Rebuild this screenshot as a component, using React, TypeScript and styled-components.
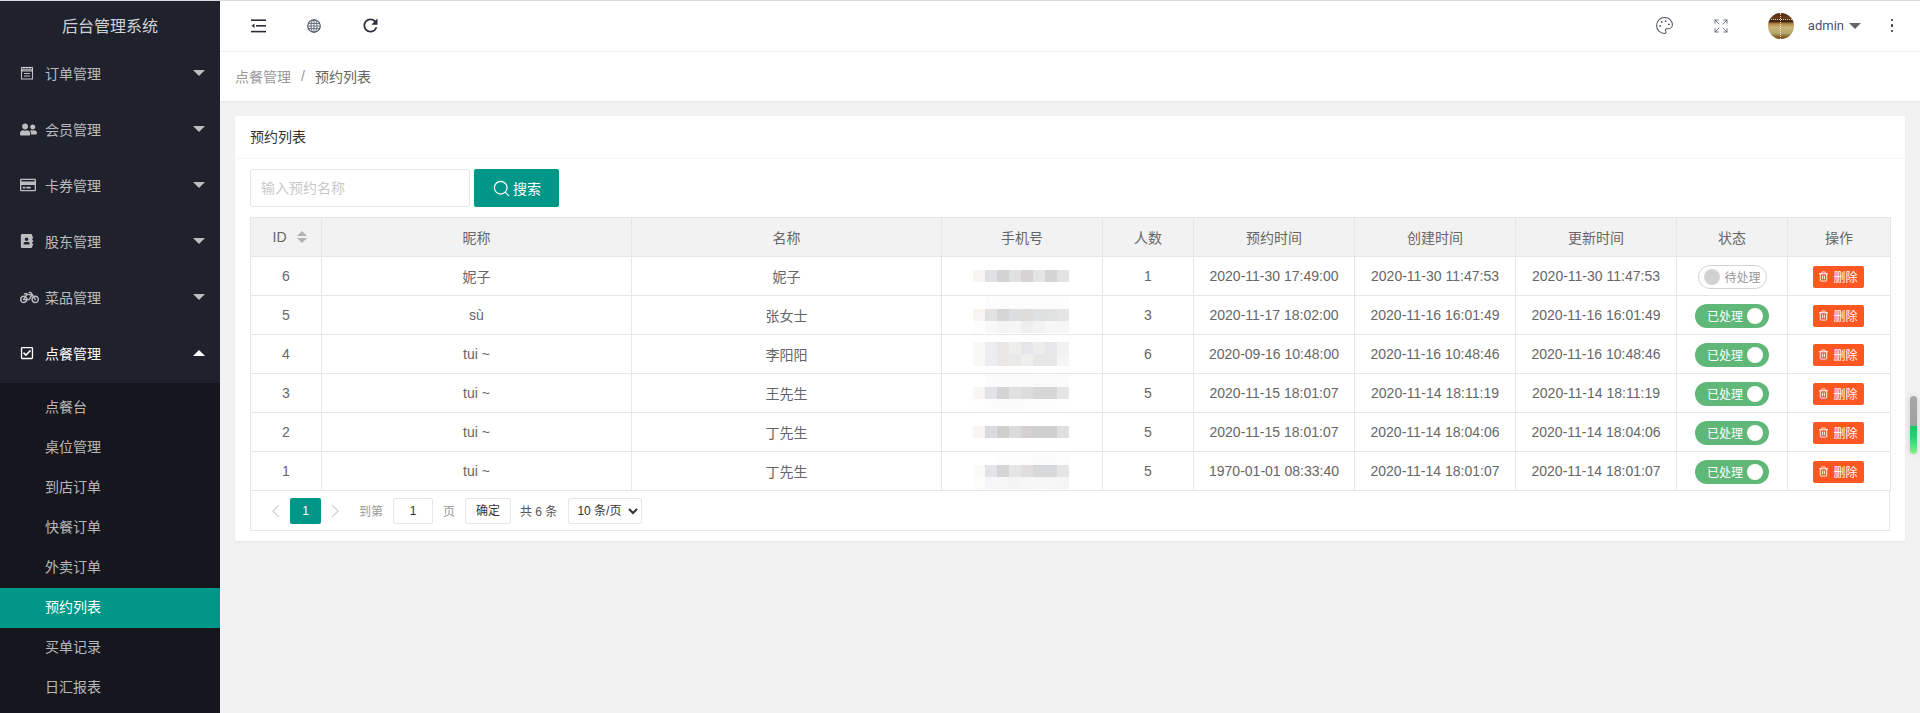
import React from "react";
import styled, { createGlobalStyle } from "styled-components";
import { Expand, Palette, Search, Trash2 } from "lucide-react";
import { MdRefresh } from "react-icons/md";
import {
  FaAddressBook,
  FaBicycle,
  FaRegCheckSquare,
  FaRegCreditCard,
  FaUserFriends,
} from "react-icons/fa";

const FONT = `"Liberation Sans", "Noto Sans CJK SC", sans-serif`;

const GlobalStyle = createGlobalStyle`
  html, body { margin: 0; padding: 0; height: 100%; }
  body { font-family: ${FONT}; font-size: 14px; color: #666; background: #f2f2f2; overflow: hidden; }
  * { box-sizing: border-box; }
`;

const Layout = styled.div`
  display: grid;
  grid-template-columns: 220px 1fr;
  height: 713px;
  border-top: 1px solid #d9d9de;
  position: relative;
`;

const Sidebar = styled.aside`
  background: #1f222c;
  overflow: hidden;
`;

const Logo = styled.div`
  height: 45px;
  padding-top: 3px;
  line-height: 45px;
  text-align: center;
  font-size: 16px;
  color: #d0d2d6;
`;

const MenuItem = styled.div<{ $active?: boolean }>`
  display: flex;
  align-items: center;
  height: 56px;
  padding: 0 15px 2px 20px;
  color: ${(p) => (p.$active ? "#fff" : "rgba(255,255,255,.7)")};
  svg { flex: none; }
`;

const MenuIcon = styled.span`
  display: flex;
  align-items: center;
  width: 25px;
`;

const MenuLabel = styled.span`
  flex: 1;
`;

const Caret = styled.span<{ $up?: boolean; $color?: string }>`
  width: 0;
  height: 0;
  border-left: 6px solid transparent;
  border-right: 6px solid transparent;
  ${(p) =>
    p.$up
      ? `border-bottom: 6px solid ${p.$color || "#fff"};`
      : `border-top: 6px solid ${p.$color || "rgba(255,255,255,.7)"};`}
`;

const SubMenu = styled.div`
  margin-top: 1px;
  padding: 5px 0;
  background: #16171e;
`;

const SubItem = styled.div<{ $active?: boolean }>`
  height: 40px;
  line-height: 39px;
  padding-left: 45px;
  color: ${(p) => (p.$active ? "#fff" : "rgba(255,255,255,.7)")};
  background: ${(p) => (p.$active ? "#009688" : "transparent")};
`;

const Main = styled.main`
  min-width: 0;
  display: flex;
  flex-direction: column;
`;

const Navbar = styled.header`
  display: flex;
  align-items: center;
  justify-content: space-between;
  height: 51px;
  padding-bottom: 1px;
  background: #fff;
  border-bottom: 1px solid #eee;
`;

const NavGroup = styled.div`
  display: flex;
  align-items: center;
`;

const LeftNavGroup = styled(NavGroup)`
  padding-left: 10px;
`;

const NavIcon = styled.span`
  display: flex;
  align-items: center;
  justify-content: center;
  width: 56px;
  height: 50px;
  color: #2b2e3a;
`;

const RightIcon = styled(NavIcon)`
  color: #4d5668;
`;

const Avatar = styled.span`
  position: relative;
  width: 26px;
  height: 26px;
  margin: 0 14px 0 19px;
  border-radius: 50%;
  overflow: hidden;
  background: linear-gradient(
    180deg,
    #4a2a10 0,
    #6d3c15 18%,
    #3d1f0c 32%,
    #b58a48 42%,
    #c9b47c 55%,
    #b5a868 78%,
    #8e6a2c 90%,
    #6d4012 100%
  );
  &::before {
    content: "";
    position: absolute;
    left: 12px;
    top: 0;
    bottom: 0;
    border-left: 1px dotted rgba(255, 255, 255, 0.8);
  }
  &::after {
    content: "";
    position: absolute;
    left: 0;
    right: 0;
    top: 6px;
    border-top: 1px dotted rgba(255, 255, 255, 0.8);
  }
`;

const UserName = styled.span`
  font-family: Roboto, ${FONT};
  font-size: 13px;
  color: #4a5468;
  margin-right: 5px;
`;

const Kebab = styled.span`
  display: flex;
  flex-direction: column;
  align-items: center;
  gap: 3px;
  width: 14px;
  margin: 0 21px 0 24px;
  i {
    width: 2.5px;
    height: 2.5px;
    border-radius: 50%;
    background: #2b2e3a;
  }
`;

const Crumbs = styled.nav`
  display: flex;
  align-items: center;
  height: 49px;
  padding: 0 0 2px 15px;
  background: #fff;
  box-shadow: 0 1px 2px rgba(0, 0, 0, 0.05);
`;

const CrumbLink = styled.span`
  color: #999;
`;

const CrumbSep = styled.span`
  margin: 0 10px;
  color: #999;
`;

const CrumbCurrent = styled.span`
  color: #666;
`;

const Content = styled.div`
  padding: 15px;
`;

const Card = styled.section`
  background: #fff;
  border-radius: 2px;
  box-shadow: 0 1px 2px rgba(0, 0, 0, 0.05);
`;

const CardTitle = styled.div`
  height: 43px;
  line-height: 42px;
  padding-left: 15px;
  color: #333;
  border-bottom: 1px solid #f6f6f6;
`;

const CardBody = styled.div`
  padding: 10px 15px;
`;

const SearchBar = styled.div`
  display: flex;
  gap: 4px;
  margin-bottom: 10px;
`;

const SearchInput = styled.input`
  width: 220px;
  height: 38px;
  padding-left: 10px;
  border: 1px solid #e6e6e6;
  border-radius: 2px;
  font: 14px ${FONT};
  outline: none;
  &::placeholder { color: #c8c8c8; }
`;

const SearchButton = styled.button`
  display: flex;
  align-items: center;
  justify-content: center;
  gap: 2px;
  width: 85px;
  height: 38px;
  border: 0;
  border-radius: 2px;
  background: #009688;
  color: #fff;
  font: 14px ${FONT};
`;

const Table = styled.table`
  width: 1640px;
  table-layout: fixed;
  border-collapse: collapse;
  border: 1px solid #e6e6e6;
`;

const Th = styled.th`
  height: 39px;
  padding: 0;
  font-weight: 400;
  color: #666;
  background: #f2f2f2;
  border: 1px solid #e6e6e6;
`;

const HeadSort = styled.span`
  display: flex;
  align-items: center;
  justify-content: center;
  gap: 10px;
  padding-left: 7px;
`;

const Td = styled.td`
  height: 39px;
  padding: 0;
  text-align: center;
  color: #666;
  border: 1px solid #e6e6e6;
`;

const PhoneCell = styled(Td)`
  padding-right: 3px;
`;

const ControlCell = styled.div<{ $shift?: number }>`
  display: flex;
  justify-content: center;
  padding: 1px ${(p) => p.$shift || 0}px 0 0;
`;

const SortArrows = styled.span`
  display: inline-flex;
  flex-direction: column;
  gap: 2px;
  i {
    width: 0;
    height: 0;
    border-left: 5px solid transparent;
    border-right: 5px solid transparent;
  }
  i:first-child { border-bottom: 5px solid #b2b2b2; }
  i:last-child { border-top: 5px solid #b2b2b2; }
`;

const Mosaic = styled.div`
  display: grid;
  grid-template-columns: repeat(8, 12px);
  grid-auto-rows: 12px;
  width: 96px;
  margin: 0 auto;
`;

const MosaicCell = styled.span<{ $color: string }>`
  background: ${(p) => p.$color};
`;

const Switch = styled.span<{ $on: boolean }>`
  display: flex;
  align-items: center;
  justify-content: space-between;
  flex-direction: ${(p) => (p.$on ? "row" : "row-reverse")};
  width: ${(p) => (p.$on ? 74 : 69)}px;
  height: 24px;
  padding: ${(p) => (p.$on ? "0 6px 0 12px" : "0 5px")};
  border-radius: 20px;
  font-size: 12px;
  color: ${(p) => (p.$on ? "#fff" : "#999")};
  background: ${(p) => (p.$on ? "#5fb878" : "#fff")};
  border: ${(p) => (p.$on ? "0" : "1px solid #d2d2d2")};
  &::after {
    content: "";
    width: 16px;
    height: 16px;
    border-radius: 50%;
    background: ${(p) => (p.$on ? "#fff" : "#d2d2d2")};
  }
`;

const DeleteButton = styled.button`
  display: flex;
  align-items: center;
  justify-content: center;
  gap: 4px;
  width: 51px;
  height: 22px;
  padding: 0;
  border: 0;
  border-radius: 2px;
  background: #ff5722;
  color: #fff;
  font: 12px ${FONT};
`;

const Pager = styled.div`
  display: flex;
  align-items: center;
  height: 40px;
  padding-left: 10px;
  border: 1px solid #e6e6e6;
  border-top: 0;
  font-size: 12px;
  color: #555;
`;

const PagerArrow = styled.span`
  display: flex;
  width: 29px;
  justify-content: center;
  color: #d2d2d2;
`;

const PageCurrent = styled.span`
  width: 31px;
  height: 26px;
  line-height: 26px;
  text-align: center;
  color: #fff;
  background: #009688;
  border-radius: 2px;
`;

const PagerText = styled.span`
  color: #999;
`;

const GotoText = styled(PagerText)`
  margin-left: 9px;
`;

const PagerInput = styled.span`
  width: 40px;
  height: 26px;
  line-height: 24px;
  margin: 0 10px;
  text-align: center;
  color: #333;
  border: 1px solid #e6e6e6;
  border-radius: 2px;
`;

const PagerButton = styled.span`
  width: 46px;
  height: 26px;
  line-height: 24px;
  margin: 0 9px 0 10px;
  text-align: center;
  color: #333;
  border: 1px solid #e6e6e6;
  border-radius: 2px;
`;

const PagerSelect = styled.select`
  width: 74px;
  height: 26px;
  margin-left: 11px;
  padding: 0 0 0 4px;
  font: 12px ${FONT};
  color: #333;
  background: #fff;
  border: 1px solid #e6e6e6;
  border-radius: 2px;
`;

const ScrollWidget = styled.div`
  position: absolute;
  top: 395px;
  right: 3px;
  width: 7px;
  height: 58px;
  border-radius: 4px;
  background: linear-gradient(180deg, #a8a8a8 0, #a0a0a0 52%, #22c566 52%, #2ecc71 70%, #86ef8c 100%);
  box-shadow: 0 0 6px rgba(0, 0, 0, 0.15);
`;

function NotebookIcon() {
  return (
    <svg width="14" height="14" viewBox="0 0 14 14" fill="none" stroke="currentColor" strokeWidth="1.1">
      <rect x="1.5" y="1.5" width="11" height="11.5" />
      <path d="M1.5 3.8h11M1.5 5h11M4 7.5h6M4 10h6M4 1v2M7 1v2M10 1v2" />
    </svg>
  );
}

function IndentIcon() {
  return (
    <svg width="15" height="14" viewBox="0 0 15 14" fill="currentColor">
      <rect x="0" y="0.4" width="15" height="1.6" />
      <rect x="5" y="6" width="10" height="1.6" />
      <rect x="0" y="11.8" width="15" height="1.6" />
      <path d="M0.5 6.8 3.5 4.6v4.4z" />
    </svg>
  );
}

function GlobeIcon() {
  return (
    <svg width="14" height="14" viewBox="0 0 14 14" fill="none" stroke="#4a5060" strokeWidth=".8">
      <circle cx="7" cy="7" r="6.3" strokeWidth="1.1" />
      <ellipse cx="7" cy="7" rx="3" ry="6.3" />
      <path d="M7 .7v12.6M1 4.4h12M.7 7h12.6M1 9.6h12" />
    </svg>
  );
}

const widths = [71, 310, 310, 161, 91, 161, 161, 161, 111, 103];
const headers = ["ID", "昵称", "名称", "手机号", "人数", "预约时间", "创建时间", "更新时间", "状态", "操作"];

const W = "#ffffff";
const rows = [
  {
    id: 6,
    nick: "妮子",
    name: "妮子",
    count: 1,
    booked: "2020-11-30 17:49:00",
    created: "2020-11-30 11:47:53",
    updated: "2020-11-30 11:47:53",
    done: false,
    phone: [["#f7f4f1", "#e0e1e4", "#d4d3d3", "#e0e1e0", "#d7d3d2", "#e3e5e4", "#d5d4d4", "#e3e3e3"]],
  },
  {
    id: 5,
    nick: "sù",
    name: "张女士",
    count: 3,
    booked: "2020-11-17 18:02:00",
    created: "2020-11-16 16:01:49",
    updated: "2020-11-16 16:01:49",
    done: true,
    phone: [
      [W, "#fcfcfc", "#fcfcfc", "#fcfcfc", "#fcfcfc", "#fcfcfc", "#fcfcfc", "#fcfcfc"],
      ["#f7f4f1", "#e0e2e2", "#d6d6d6", "#dcdee0", "#dfdddc", "#dee0e2", "#e0e2e1", "#e5e5e5"],
      ["#fdfdfd", "#f8f8f9", "#f5f5f5", "#f5f6f6", "#efeff0", "#f3f3f4", "#f7f7f7", "#f6f6f6"],
    ],
  },
  {
    id: 4,
    nick: "tui ~",
    name: "李阳阳",
    count: 6,
    booked: "2020-09-16 10:48:00",
    created: "2020-11-16 10:48:46",
    updated: "2020-11-16 10:48:46",
    done: true,
    phone: [
      ["#f8f8f7", "#ebedf0", "#e8e7e5", "#eeeeed", "#e5e6e9", "#ededee", "#e6e7e8", "#f1f2f2"],
      ["#f8f8f7", "#ebedf0", "#e9e8e6", "#e9e9e7", "#eeeeec", "#e7e7e8", "#e7e7e7", "#f4f5f6"],
    ],
  },
  {
    id: 3,
    nick: "tui ~",
    name: "王先生",
    count: 5,
    booked: "2020-11-15 18:01:07",
    created: "2020-11-14 18:11:19",
    updated: "2020-11-14 18:11:19",
    done: true,
    phone: [
      [W, "#fcfcfc", "#fbfbfb", "#fbfbfb", "#fafafa", "#f9f9f9", "#f9f9f9", "#fbfbfb"],
      ["#f8f6f3", "#e1e3e6", "#d4d4d4", "#e1e1e1", "#dcdcda", "#d6d7d6", "#d6d7d6", "#e5e5e5"],
      ["#fefefe", "#fcfcfc", "#fbfbfb", "#fbfbfb", "#fcfcfc", "#fcfcfc", "#fdfdfd", "#fefefe"],
    ],
  },
  {
    id: 2,
    nick: "tui ~",
    name: "丁先生",
    count: 5,
    booked: "2020-11-15 18:01:07",
    created: "2020-11-14 18:04:06",
    updated: "2020-11-14 18:04:06",
    done: true,
    phone: [["#f7f4f1", "#dadbdf", "#cfcfcd", "#dbdbdb", "#d2d1cf", "#cfcfd0", "#cfcfd0", "#dfdfdf"]],
  },
  {
    id: 1,
    nick: "tui ~",
    name: "丁先生",
    count: 5,
    booked: "1970-01-01 08:33:40",
    created: "2020-11-14 18:01:07",
    updated: "2020-11-14 18:01:07",
    done: true,
    phone: [
      [W, W, "#fdfdfd", "#fcfcfc", "#fcfcfc", "#fbfbfb", "#fbfbfb", "#fcfcfc"],
      ["#fafaf8", "#e2e4e7", "#d5d5d5", "#e4e6e6", "#dfdedd", "#d7d8d9", "#d7d8d9", "#e5e5e5"],
      ["#fcfcfb", "#f5f6f8", "#f6f6f6", "#f3f4f4", "#f6f6f6", "#f6f7f7", "#f6f6f6", "#f5f5f5"],
    ],
  },
];

const menus = [
  { label: "订单管理", icon: <NotebookIcon /> },
  { label: "会员管理", icon: <FaUserFriends size={17} /> },
  { label: "卡券管理", icon: <FaRegCreditCard size={16} /> },
  { label: "股东管理", icon: <FaAddressBook size={14} /> },
  { label: "菜品管理", icon: <FaBicycle size={19} /> },
];

const subMenus = ["点餐台", "桌位管理", "到店订单", "快餐订单", "外卖订单", "预约列表", "买单记录", "日汇报表"];

function App() {
  return (
    <>
      <GlobalStyle />
      <Layout>
        <Sidebar>
          <Logo>后台管理系统</Logo>
          {menus.map((m) => (
            <MenuItem key={m.label}>
              <MenuIcon>{m.icon}</MenuIcon>
              <MenuLabel>{m.label}</MenuLabel>
              <Caret />
            </MenuItem>
          ))}
          <MenuItem $active>
            <MenuIcon>
              <FaRegCheckSquare size={14} />
            </MenuIcon>
            <MenuLabel>点餐管理</MenuLabel>
            <Caret $up />
          </MenuItem>
          <SubMenu>
            {subMenus.map((s) => (
              <SubItem key={s} $active={s === "预约列表"}>
                {s}
              </SubItem>
            ))}
          </SubMenu>
        </Sidebar>
        <Main>
          <Navbar>
            <LeftNavGroup>
              <NavIcon>
                <IndentIcon />
              </NavIcon>
              <NavIcon>
                <GlobeIcon />
              </NavIcon>
              <NavIcon>
                <MdRefresh size={21} />
              </NavIcon>
            </LeftNavGroup>
            <NavGroup>
              <RightIcon>
                <Palette size={19} strokeWidth={1.3} />
              </RightIcon>
              <RightIcon>
                <Expand size={16} strokeWidth={1.2} />
              </RightIcon>
              <Avatar />
              <UserName>admin</UserName>
              <Caret $color="#666" />
              <Kebab>
                <i />
                <i />
                <i />
              </Kebab>
            </NavGroup>
          </Navbar>
          <Crumbs>
            <CrumbLink>点餐管理</CrumbLink>
            <CrumbSep>/</CrumbSep>
            <CrumbCurrent>预约列表</CrumbCurrent>
          </Crumbs>
          <Content>
            <Card>
              <CardTitle>预约列表</CardTitle>
              <CardBody>
                <SearchBar>
                  <SearchInput placeholder="输入预约名称" />
                  <SearchButton>
                    <Search size={19} strokeWidth={1.5} />
                    搜索
                  </SearchButton>
                </SearchBar>
                <Table>
                  <colgroup>
                    {widths.map((w, i) => (
                      <col key={i} width={w} />
                    ))}
                  </colgroup>
                  <thead>
                    <tr>
                      {headers.map((h) => (
                        <Th key={h}>
                          {h === "ID" ? (
                            <HeadSort>
                              {h}
                              <SortArrows>
                                <i />
                                <i />
                              </SortArrows>
                            </HeadSort>
                          ) : (
                            h
                          )}
                        </Th>
                      ))}
                    </tr>
                  </thead>
                  <tbody>
                    {rows.map((r) => (
                      <tr key={r.id}>
                        <Td>{r.id}</Td>
                        <Td>{r.nick}</Td>
                        <Td>{r.name}</Td>
                        <PhoneCell>
                          <Mosaic>
                            {r.phone.flat().map((c, i) => (
                              <MosaicCell key={i} $color={c} />
                            ))}
                          </Mosaic>
                        </PhoneCell>
                        <Td>{r.count}</Td>
                        <Td>{r.booked}</Td>
                        <Td>{r.created}</Td>
                        <Td>{r.updated}</Td>
                        <Td>
                          <ControlCell>
                            <Switch $on={r.done}>{r.done ? "已处理" : "待处理"}</Switch>
                          </ControlCell>
                        </Td>
                        <Td>
                          <ControlCell $shift={2}>
                            <DeleteButton>
                              <Trash2 size={11} />
                              删除
                            </DeleteButton>
                          </ControlCell>
                        </Td>
                      </tr>
                    ))}
                  </tbody>
                </Table>
                <Pager>
                  <PagerArrow>
                    <svg width="9" height="14" viewBox="0 0 9 14" fill="none" stroke="currentColor" strokeWidth="1.3">
                      <path d="M8 1 2 7l6 6" />
                    </svg>
                  </PagerArrow>
                  <PageCurrent>1</PageCurrent>
                  <PagerArrow>
                    <svg width="9" height="14" viewBox="0 0 9 14" fill="none" stroke="currentColor" strokeWidth="1.3">
                      <path d="m1 1 6 6-6 6" />
                    </svg>
                  </PagerArrow>
                  <GotoText>到第</GotoText>
                  <PagerInput>1</PagerInput>
                  <PagerText>页</PagerText>
                  <PagerButton>确定</PagerButton>
                  <span>共 6 条</span>
                  <PagerSelect defaultValue="10">
                    <option value="10">10 条/页</option>
                  </PagerSelect>
                </Pager>
              </CardBody>
            </Card>
          </Content>
        </Main>
        <ScrollWidget />
      </Layout>
    </>
  );
}

export default App;
